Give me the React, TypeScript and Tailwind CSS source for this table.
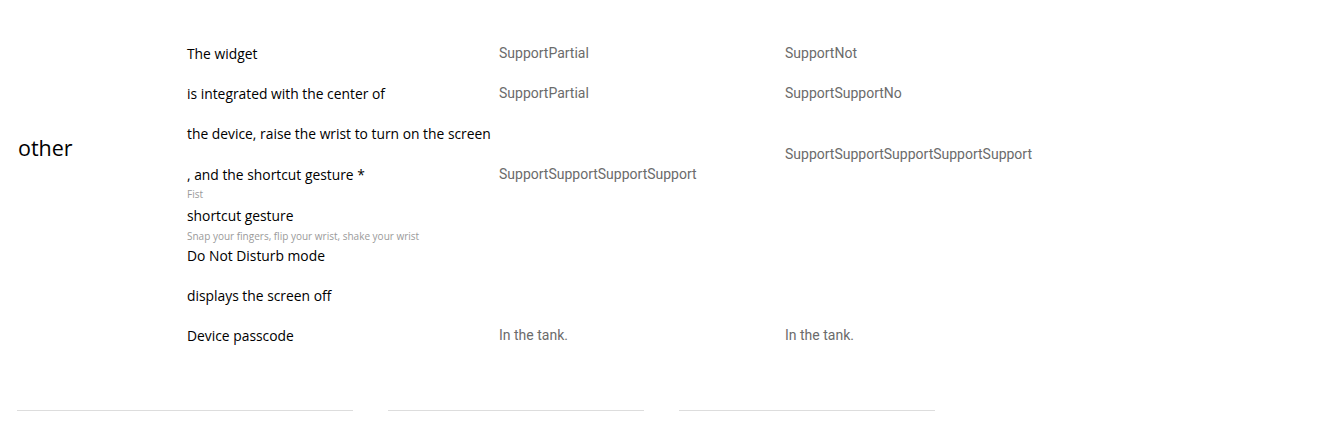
const rows = [
  { label: "The widget", a: "SupportPartial", b: "SupportNot" },
  { label: "is integrated with the center of", a: "SupportPartial", b: "SupportSupportNo" },
];

function Label({ children }: { children: React.ReactNode }) {
  return <div className="text-[13.85px] leading-[20px] text-black">{children}</div>;
}

function Value({ children }: { children: React.ReactNode }) {
  return <div className="text-[14px] leading-[20px] text-[#6b6b6b] font-['Roboto',sans-serif]">{children}</div>;
}

function Sub({ children }: { children: React.ReactNode }) {
  return <div className="text-[10px] leading-[12px] text-[#9a9a9a]">{children}</div>;
}

export default function App() {
  return (
    <div className="w-[1317px] h-[432px] bg-white font-['Open_Sans',sans-serif] overflow-hidden">
      <div className="flex pt-[34px]">
        <div className="w-[187px] pl-[18px] pt-[99px]">
          <h3 className="text-[21.5px] leading-[30px] text-black">other</h3>
        </div>
        <div className="grid grid-cols-[312px_286px_300px] grid-rows-[40px_40px_40px_40px_41px_40px_40px_40px]">
          {rows.map((r) => (
            <div key={r.label} className="contents">
              <div className="flex items-center"><Label>{r.label}</Label></div>
              <div className="flex items-center pb-[2px]"><Value>{r.a}</Value></div>
              <div className="flex items-center pb-[2px]"><Value>{r.b}</Value></div>
            </div>
          ))}

          <div className="flex items-center"><Label>the device, raise the wrist to turn on the screen</Label></div>
          <div />
          <div className="row-span-2 flex items-center"><Value>SupportSupportSupportSupportSupport</Value></div>

          <div className="pt-[11px]">
            <Label>, and the shortcut gesture *</Label>
            <div className="mt-[3px]"><Sub>Fist</Sub></div>
          </div>
          <div className="flex items-center"><Value>SupportSupportSupportSupport</Value></div>

          <div className="pt-[12px] col-span-3">
            <Label>shortcut gesture</Label>
            <div className="mt-[4px]"><Sub>Snap your fingers, flip your wrist, shake your wrist</Sub></div>
          </div>

          <div className="flex items-center pt-[2px] col-span-3"><Label>Do Not Disturb mode</Label></div>
          <div className="flex items-center pt-[2px] col-span-3"><Label>displays the screen off</Label></div>

          <div className="flex items-center pt-[2px]"><Label>Device passcode</Label></div>
          <div className="flex items-center"><Value>In the tank.</Value></div>
          <div className="flex items-center"><Value>In the tank.</Value></div>
        </div>
      </div>
      <div className="flex mt-[55px] pl-[17px]">
        <div className="w-[336px] h-px bg-[#dddddd]" />
        <div className="w-[256px] h-px bg-[#dddddd] ml-[35px]" />
        <div className="w-[256px] h-px bg-[#dddddd] ml-[35px]" />
      </div>
    </div>
  );
}
